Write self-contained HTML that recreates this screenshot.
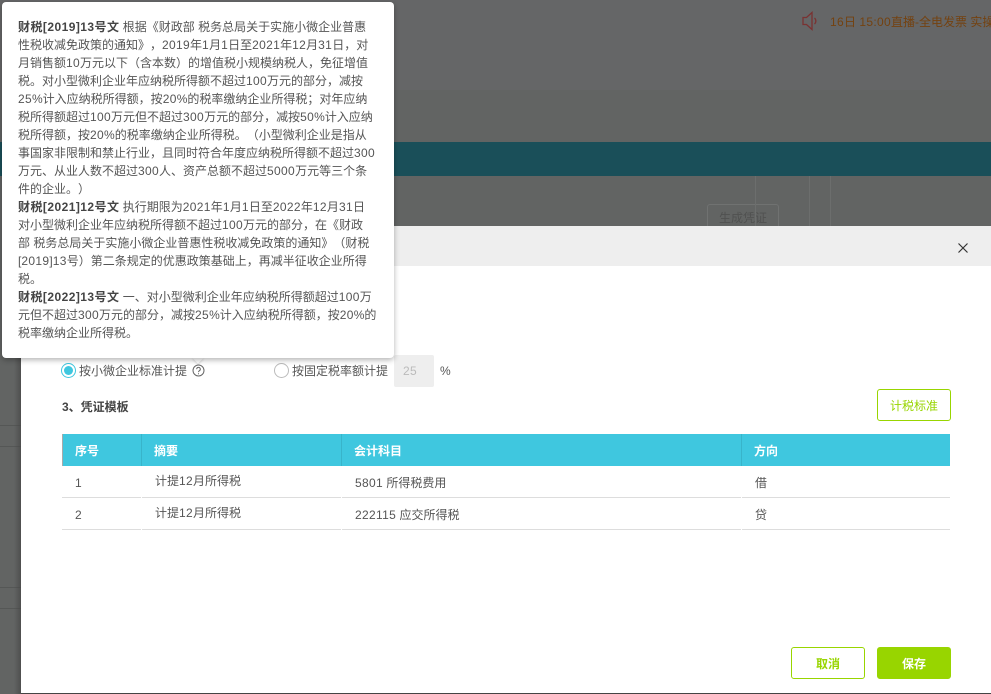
<!DOCTYPE html>
<html lang="zh"><head><meta charset="utf-8"><style>
html,body{margin:0;padding:0}
body{width:991px;height:694px;position:relative;overflow:hidden;background:#626463;font-family:"Liberation Sans","Noto Sans CJK SC",sans-serif;font-size:12px;color:#555;text-spacing-trim:space-all}
i{font-style:normal;letter-spacing:.33px}
.a{position:absolute;white-space:nowrap}
.tip{left:2px;top:2px;width:392px;height:356px;background:#fff;border-radius:4px;box-shadow:0 2px 6px rgba(0,0,0,.3);z-index:5}
.tip .t{position:absolute;left:16px;top:16px;line-height:18px;color:#555;white-space:nowrap}
.tip b{color:#444;letter-spacing:.45px}
.arrow{left:194px;top:354px;width:8px;height:8px;background:#fff;transform:rotate(45deg);z-index:5;box-shadow:1px 1px 2px rgba(0,0,0,.12)}
.row{left:62px;width:888px;height:1px;background:#ddd}
.gap{width:1px;height:1px;background:#fff}
.th{top:434px;height:32px;line-height:34px;color:#fff;font-weight:bold;padding-left:12px;box-sizing:border-box;background:#3fc7df;border-right:1px solid #38b4ca}
.c{color:#555;line-height:16px}
.btn{box-sizing:border-box;text-align:center;border:1px solid #98d500;border-radius:3px;color:#98d500;background:#fff}
</style></head><body>
<div class="a" style="left:0;top:0;width:991px;height:90px;background:#656667"></div>
<div class="a" style="left:0;top:90px;width:991px;height:52px;background:#626463"></div>
<div class="a" style="left:0;top:142px;width:991px;height:34px;background:#1a4f59"></div>
<svg class="a" style="left:802px;top:11px" width="18" height="20" viewBox="0 0 18 20" fill="none" stroke="#7a3232" stroke-width="1.3"><path d="M1 6.500h3.500L10 1.500v17l-5.500-5H1z"/><path d="M12.500 7a4 4 0 0 1 0 6"/></svg>
<div class="a" style="left:830px;top:14px;color:#744210;line-height:16px"><i>16</i>日 <i>15:00</i>直播-全电发票 实操</div>
<div class="a" style="left:707px;top:204px;width:72px;height:30px;box-sizing:border-box;border:1px solid #707271;border-radius:3px;color:#505150;text-align:center;line-height:27px">生成凭证</div>
<div class="a" style="left:755px;top:176px;width:1px;height:50px;background:#6c6e6d"></div>
<div class="a" style="left:809px;top:176px;width:1px;height:50px;background:#6c6e6d"></div>
<div class="a" style="left:830px;top:176px;width:1px;height:50px;background:#6c6e6d"></div>
<div class="a" style="left:0;top:425px;width:21px;height:1px;background:#555756"></div>
<div class="a" style="left:0;top:446px;width:21px;height:1px;background:#555756"></div>
<div class="a" style="left:0;top:587px;width:21px;height:1px;background:#555756"></div>
<div class="a" style="left:0;top:608px;width:21px;height:1px;background:#555756"></div>
<div class="a" style="left:14px;top:226px;width:7px;height:468px;background:linear-gradient(90deg,rgba(70,70,70,0),rgba(70,70,70,.7))"></div>
<div class="a" style="left:21px;top:226px;width:970px;height:467px;background:#fff"></div>
<div class="a" style="left:21px;top:226px;width:970px;height:40px;background:#eee"></div>
<div class="a" style="left:21px;top:693px;width:970px;height:1px;background:#444"></div>
<svg class="a" style="left:957px;top:242px" width="12" height="12" viewBox="0 0 12 12" stroke="#333" stroke-width="1.200" fill="none"><path d="M1.500 1.500l9 9M10.500 1.500l-9 9"/></svg>

<div class="a" style="left:61px;top:363px;width:15px;height:15px;box-sizing:border-box;border:1px solid #3fc7df;border-radius:50%"></div>
<div class="a" style="left:64px;top:366px;width:9px;height:9px;background:#3fc7df;border-radius:50%"></div>
<div class="a c" style="left:79px;top:363px">按小微企业标准计提</div>
<svg class="a" style="left:192px;top:364px" width="13" height="13" viewBox="0 0 13 13" fill="none" stroke="#666"><circle cx="6.500" cy="6.500" r="5.500"/><path d="M4.700 5.200a1.800 1.800 0 1 1 2.700 1.500c-.6.400-.9.700-.9 1.400"/><path d="M6.500 9.200v1"/></svg>
<div class="a" style="left:274px;top:363px;width:15px;height:15px;box-sizing:border-box;border:1px solid #bbb;border-radius:50%"></div>
<div class="a c" style="left:292px;top:363px">按固定税率额计提</div>
<div class="a" style="left:394px;top:355px;width:40px;height:32px;box-sizing:border-box;background:#eee;border-radius:2px;color:#bbb;line-height:32px;padding-left:9px"><i>25</i></div>
<div class="a c" style="left:440px;top:363px">%</div>
<div class="a" style="left:62px;top:399px;font-weight:bold;color:#444;line-height:16px">3、凭证模板</div>
<div class="a btn" style="left:877px;top:389px;width:74px;height:32px;line-height:32px">计税标准</div>

<div class="a th" style="left:62px;width:80px;border-left:1px solid #aaa">序号</div>
<div class="a th" style="left:142px;width:200px">摘要</div>
<div class="a th" style="left:342px;width:400px">会计科目</div>
<div class="a th" style="left:742px;width:208px;border-right:0">方向</div>
<div class="a c" style="left:75px;top:475px">1</div>
<div class="a c" style="left:155px;top:473px">计提<i>12</i>月所得税</div>
<div class="a c" style="left:355px;top:475px"><i>5801</i> 所得税费用</div>
<div class="a c" style="left:755px;top:475px">借</div>
<div class="a row" style="top:497px"></div>
<div class="a c" style="left:75px;top:507px">2</div>
<div class="a c" style="left:155px;top:505px">计提<i>12</i>月所得税</div>
<div class="a c" style="left:355px;top:507px"><i>222115</i> 应交所得税</div>
<div class="a c" style="left:755px;top:507px">贷</div>
<div class="a row" style="top:529px"></div>
<div class="a gap" style="left:141px;top:497px"></div><div class="a gap" style="left:341px;top:497px"></div><div class="a gap" style="left:741px;top:497px"></div>
<div class="a gap" style="left:141px;top:529px"></div><div class="a gap" style="left:341px;top:529px"></div><div class="a gap" style="left:741px;top:529px"></div>

<div class="a btn" style="left:791px;top:647px;width:74px;height:32px;line-height:32px;font-weight:bold">取消</div>
<div class="a btn" style="left:877px;top:647px;width:74px;height:32px;line-height:32px;background:#98d500;color:#fff;font-weight:bold">保存</div>

<div class="a arrow"></div>
<div class="a tip"><div class="t"><b>财税[2019]13号文</b> 根据《财政部 税务总局关于实施小微企业普惠<br>性税收减免政策的通知》，<i>2019</i>年<i>1</i>月<i>1</i>日至<i>2021</i>年<i>12</i>月<i>31</i>日，对<br>月销售额<i>10</i>万元以下（含本数）的增值税小规模纳税人，免征增值<br>税。对小型微利企业年应纳税所得额不超过<i>100</i>万元的部分，减按<br><i>25</i>%计入应纳税所得额，按<i>20</i>%的税率缴纳企业所得税；对年应纳<br>税所得额超过<i>100</i>万元但不超过<i>300</i>万元的部分，减按<i>50</i>%计入应纳<br>税所得额，按<i>20</i>%的税率缴纳企业所得税。（小型微利企业是指从<br>事国家非限制和禁止行业，且同时符合年度应纳税所得额不超过<i>300</i><br>万元、从业人数不超过<i>300</i>人、资产总额不超过<i>5000</i>万元等三个条<br>件的企业。）<br><b>财税[2021]12号文</b> 执行期限为<i>2021</i>年<i>1</i>月<i>1</i>日至<i>2022</i>年<i>12</i>月<i>31</i>日<br>对小型微利企业年应纳税所得额不超过<i>100</i>万元的部分，在《财政<br>部 税务总局关于实施小微企业普惠性税收减免政策的通知》（财税<br>[<i>2019</i>]<i>13</i>号）第二条规定的优惠政策基础上，再减半征收企业所得<br>税。<br><b>财税[2022]13号文</b> 一、对小型微利企业年应纳税所得额超过<i>100</i>万<br>元但不超过<i>300</i>万元的部分，减按<i>25</i>%计入应纳税所得额，按<i>20</i>%的<br>税率缴纳企业所得税。</div></div>
</body></html>
